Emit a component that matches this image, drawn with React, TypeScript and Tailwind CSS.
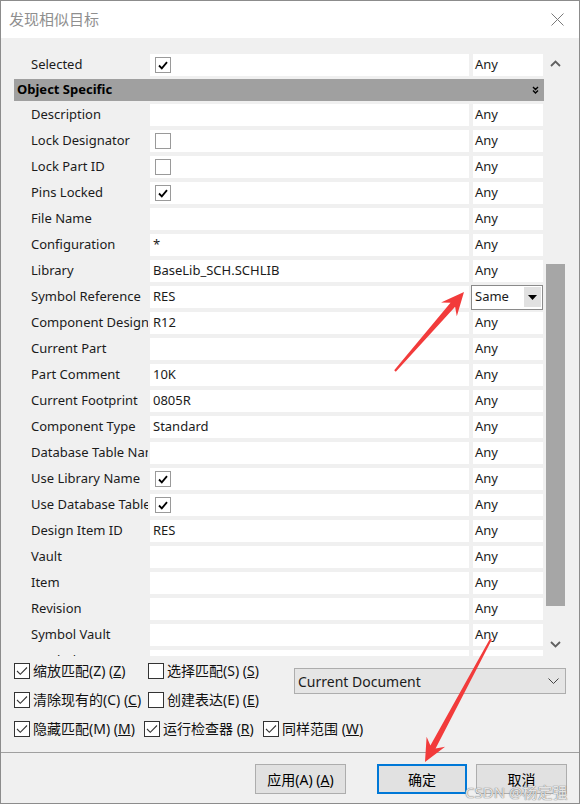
import type React from 'react'

type Row = {
  label: string
  value?: string
  check?: boolean
  same?: boolean
}

const rows: Row[] = [
  { label: 'Description' },
  { label: 'Lock Designator', check: false },
  { label: 'Lock Part ID', check: false },
  { label: 'Pins Locked', check: true },
  { label: 'File Name' },
  { label: 'Configuration', value: '*' },
  { label: 'Library', value: 'BaseLib_SCH.SCHLIB' },
  { label: 'Symbol Reference', value: 'RES', same: true },
  { label: 'Component Designator', value: 'R12' },
  { label: 'Current Part' },
  { label: 'Part Comment', value: '10K' },
  { label: 'Current Footprint', value: '0805R' },
  { label: 'Component Type', value: 'Standard' },
  { label: 'Database Table Name' },
  { label: 'Use Library Name', check: true },
  { label: 'Use Database Table', check: true },
  { label: 'Design Item ID', value: 'RES' },
  { label: 'Vault' },
  { label: 'Item' },
  { label: 'Revision' },
  { label: 'Symbol Vault' },
  { label: 'Symbol Item' },
]

// グリッド内のチェックボックス
const GridCheck = ({ checked }: { checked: boolean }) => (
  <span className="ml-[2px] flex h-[16px] w-[16px] items-center justify-center border border-[#9a9a9a] bg-white">
    {checked && (
      <svg width="10" height="9" viewBox="0 0 10 9">
        <path d="M1 4.5 L3.8 7.3 L9 1.2" fill="none" stroke="#000" strokeWidth="1.8" />
      </svg>
    )}
  </span>
)

// 下部オプションのチェックボックス
const OptCheck = ({ checked, children }: { checked: boolean; children: React.ReactNode }) => (
  <span className="flex items-center">
    <span className="flex h-[16px] w-[16px] items-center justify-center border border-[#333] bg-white">
      {checked && (
        <svg width="12" height="10" viewBox="0 0 12 10">
          <path d="M1 5 L4.3 8.3 L11 1.5" fill="none" stroke="#333" strokeWidth="1.1" />
        </svg>
      )}
    </span>
    <span className="ml-[3px] whitespace-nowrap text-[14px] text-[#111]">{children}</span>
  </span>
)

const GridRow = ({ row }: { row: Row }) => (
  <div className="flex h-[26px] items-center">
    <div className="w-[134px] overflow-hidden whitespace-nowrap pl-[17px] text-[13px] text-[#1b1b1b]">{row.label}</div>
    <div className="ml-[2px] flex h-[22px] w-[319px] items-center bg-white pl-[3px] text-[13px] text-[#1b1b1b]">
      {row.check !== undefined ? <GridCheck checked={row.check} /> : row.value}
    </div>
    {row.same ? (
      <div className="ml-[2px] flex h-[25px] w-[72px] items-center border border-[#8a8a8a] bg-white pl-[3px] text-[13px] text-[#1b1b1b]">
        <span className="flex-1">Same</span>
        <span className="mr-[1px] flex h-[20px] w-[17px] items-center justify-center bg-[#e1e1e1]">
          <svg width="9" height="5" viewBox="0 0 9 5">
            <path d="M0 0 L9 0 L4.5 5 Z" fill="#000" />
          </svg>
        </span>
      </div>
    ) : (
      <div className="ml-[4px] flex h-[22px] w-[70px] items-center bg-white pl-[2px] text-[13px] text-[#1b1b1b]">Any</div>
    )}
  </div>
)

export default function App() {
  return (
    <div className="relative flex h-[804px] w-[580px] flex-col overflow-hidden border border-[#8c8c8c] bg-[#f0f0f0] font-['Noto_Sans','Noto_Sans_CJK_SC',sans-serif]">
      {/* タイトルバー */}
      <div className="flex h-[37px] shrink-0 items-center justify-between bg-white pl-[8px] pr-[15px]">
        <span className="text-[15px] text-[#8f8f8f]">发现相似目标</span>
        <svg width="13" height="13" viewBox="0 0 13 13">
          <path d="M0.5 0.5 L12.5 12.5 M12.5 0.5 L0.5 12.5" stroke="#7a7a7a" strokeWidth="1" />
        </svg>
      </div>

      {/* プロパティグリッド */}
      <div className="mt-[14px] flex h-[604px] shrink-0 pl-[13px]">
        <div className="w-[531px] overflow-hidden">
          <GridRow row={{ label: 'Selected', check: true }} />
          <div className="flex h-[24px] items-center">
            <div className="flex h-[22px] w-[530px] items-center justify-between bg-[#a0a0a0] pl-[3px] pr-[5px] text-[13px] font-bold text-black">
              <span>Object Specific</span>
              <svg width="7" height="8" viewBox="0 0 7 8">
                <path d="M1 1 L3.5 3.5 L6 1 M1 4.5 L3.5 7 L6 4.5" fill="none" stroke="#000" strokeWidth="1.4" />
              </svg>
            </div>
          </div>
          {rows.map((r) => (
            <GridRow key={r.label} row={r} />
          ))}
        </div>
        <div className="ml-[1px] flex w-[19px] flex-col">
          <div className="flex h-[22px] items-center justify-center">
            <svg width="11" height="7" viewBox="0 0 11 7">
              <path d="M1 6 L5.5 1.5 L10 6" fill="none" stroke="#606060" strokeWidth="1.8" />
            </svg>
          </div>
          <div className="flex-1">
            <div className="mt-[190px] h-[342px] bg-[#a6a6a6]" />
          </div>
          <div className="flex h-[24px] items-center justify-center">
            <svg width="11" height="7" viewBox="0 0 11 7">
              <path d="M1 1 L5.5 5.5 L10 1" fill="none" stroke="#606060" strokeWidth="1.8" />
            </svg>
          </div>
        </div>
      </div>

      {/* オプション */}
      <div className="flex h-[97px] shrink-0 flex-col border-b border-[#a0a0a0] pl-[13px]">
        <div className="flex">
          <div className="flex w-[280px] flex-col">
            <div className="flex h-[29px] items-center">
              <div className="w-[134px]">
                <OptCheck checked>
                  缩放匹配(Z) (<u>Z</u>)
                </OptCheck>
              </div>
              <OptCheck checked={false}>
                选择匹配(S) (<u>S</u>)
              </OptCheck>
            </div>
            <div className="flex h-[29px] items-center">
              <div className="w-[134px]">
                <OptCheck checked>
                  清除现有的(C) (<u>C</u>)
                </OptCheck>
              </div>
              <OptCheck checked={false}>
                创建表达(E) (<u>E</u>)
              </OptCheck>
            </div>
          </div>
          <div className="mt-[12px] flex h-[26px] w-[272px] items-center justify-between border border-[#adadad] bg-[#e5e5e5] pl-[3px] pr-[6px] text-[14px] text-[#1b1b1b]">
            <span>Current Document</span>
            <svg width="11" height="6" viewBox="0 0 11 6">
              <path d="M0.5 0.5 L5.5 5.5 L10.5 0.5" fill="none" stroke="#444" strokeWidth="1" />
            </svg>
          </div>
        </div>
        <div className="flex h-[29px] items-center">
          <div className="w-[130px]">
            <OptCheck checked>
              隐藏匹配(M) (<u>M</u>)
            </OptCheck>
          </div>
          <div className="w-[119px]">
            <OptCheck checked>
              运行检查器 (<u>R</u>)
            </OptCheck>
          </div>
          <OptCheck checked>
            同样范围 (<u>W</u>)
          </OptCheck>
        </div>
      </div>

      {/* ボタン */}
      <div className="flex flex-1 items-start pl-[254px] pt-[11px]">
        <button type="button" className="flex h-[30px] w-[91px] items-center justify-center border border-[#adadad] bg-[#e1e1e1] text-[14px] text-black">
          应用(A) (<u>A</u>)
        </button>
        <button type="button" className="ml-[31px] flex h-[30px] w-[90px] items-center justify-center border-2 border-[#0078d7] bg-[#e1e1e1] text-[14px] text-black">
          确定
        </button>
        <button type="button" className="ml-[9px] flex h-[30px] w-[91px] items-center justify-center border border-[#adadad] bg-[#e1e1e1] text-[14px] text-black">
          取消
        </button>
      </div>

      {/* 透かし */}
      <div className="pointer-events-none absolute left-[464px] top-[780px] text-[15px] text-white/80 [text-shadow:0_0_1px_#777,0_0_1px_#777]">
        CSDN @杨定强
      </div>

      {/* 注釈の矢印 */}
      <svg className="pointer-events-none absolute left-0 top-0" width="580" height="804" viewBox="0 0 580 804">
        <polygon points="393.2,369.3 449.5,301.8 440,301.4 463,291 455.8,315.2 454.1,305.8 394.8,370.7" fill="#f23b3b" />
        <polygon points="489.1,637.5 429.4,744.6 425.6,735.7 424,761 444.1,745.7 434.6,747.4 490.9,638.5" fill="#f23b3b" />
      </svg>
    </div>
  )
}
